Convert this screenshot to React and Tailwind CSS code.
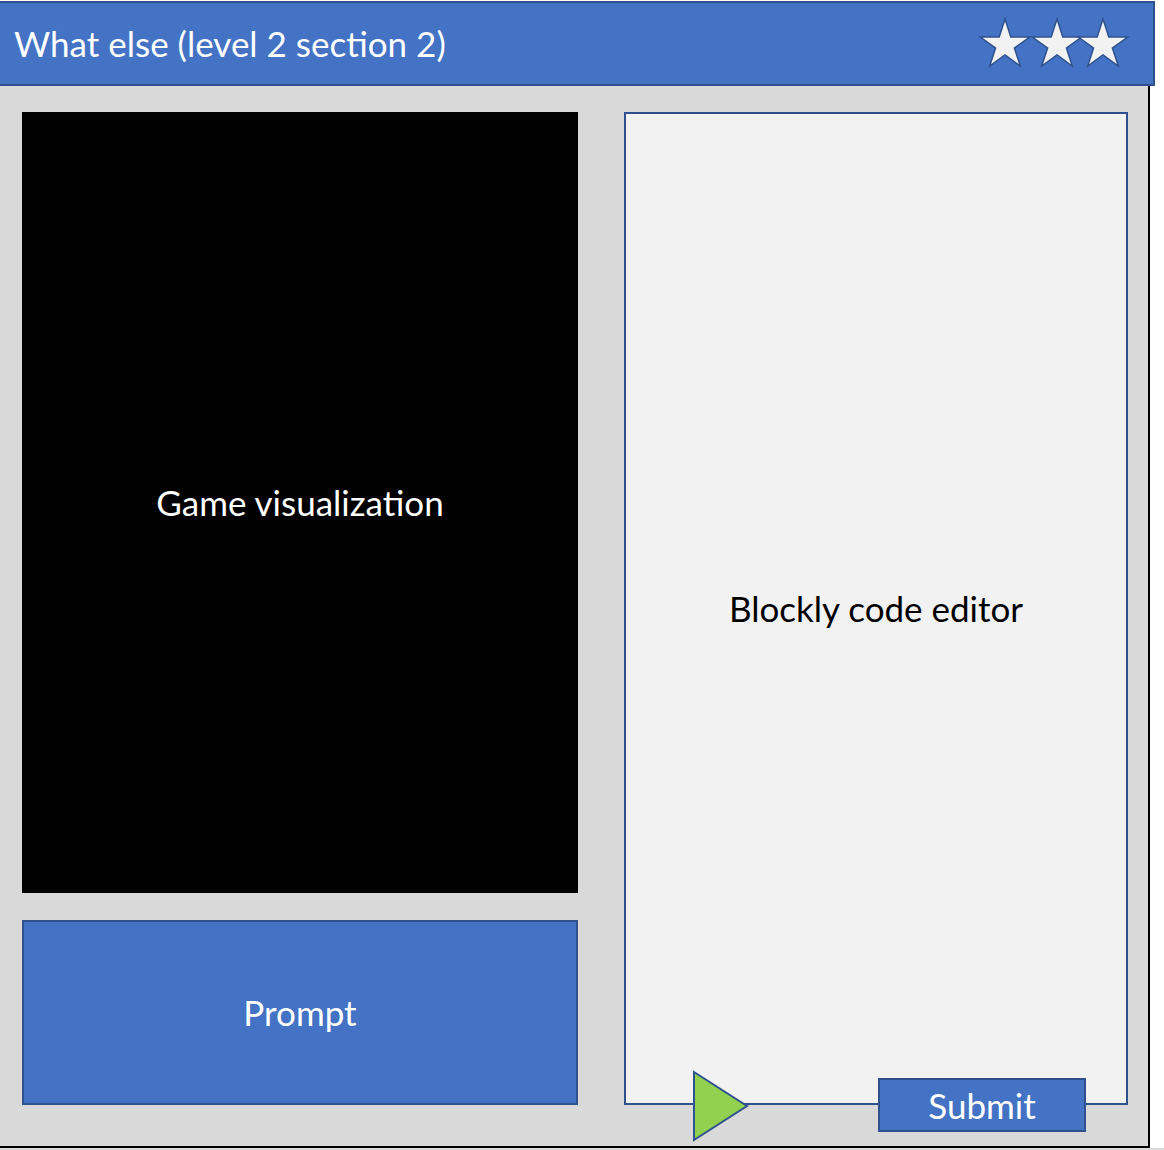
const starPoints = (cx, cy, R) => {
  const r = R * 0.382
  const pts = []
  for (let i = 0; i < 10; i++) {
    const rad = i % 2 === 0 ? R : r
    const a = (Math.PI / 5) * i - Math.PI / 2
    pts.push(`${(cx + rad * Math.cos(a)).toFixed(1)},${(cy + rad * Math.sin(a)).toFixed(1)}`)
  }
  return pts.join(' ')
}

const Stars = () => (
  <svg width="156" height="60" viewBox="0 0 156 60">
    {[28, 80, 126].map((cx) => (
      <polygon
        key={cx}
        points={starPoints(cx, 31, 26)}
        fill="#f2f2f2"
        stroke="#2f528f"
        strokeWidth="1.5"
      />
    ))}
  </svg>
)

export default function App() {
  return (
    <div className="w-[1164px] h-[1150px] bg-white relative" style={{ fontFamily: 'Lato, "Open Sans", sans-serif' }}>
      <div className="w-[1155px] h-[85px] mt-[1px] bg-[#4472c4] border-y-2 border-r-2 border-[#2f528f] flex items-center justify-between pl-[14px] pr-[20px]">
        <h1 className="text-white text-[35px] leading-none">What else (level 2 section 2)</h1>
        <Stars />
      </div>
      <div className="w-[1150px] h-[1062px] bg-[#d9d9d9] border-r-2 border-b-2 border-black flex pt-[26px] pl-[22px] gap-[46px]">
        <div className="flex flex-col w-[556px] gap-[27px]">
          <div className="h-[781px] bg-black flex items-center justify-center">
            <span className="text-white text-[35px]">Game visualization</span>
          </div>
          <div className="h-[185px] bg-[#4472c4] border-2 border-[#2f528f] flex items-center justify-center">
            <span className="text-white text-[35px]">Prompt</span>
          </div>
        </div>
        <div className="relative w-[504px] h-[993px] bg-[#f2f2f2] border-2 border-[#2f528f] flex items-center justify-center">
          <span className="text-black text-[35px]">Blockly code editor</span>
          <svg className="absolute left-[66px] top-[956px]" width="58" height="72" viewBox="0 0 58 72">
            <polygon points="2,2 55,36 2,70" fill="#92d050" stroke="#2f528f" strokeWidth="2" />
          </svg>
          <button className="absolute left-[252px] top-[964px] w-[208px] h-[54px] bg-[#4472c4] border-2 border-[#2f528f] text-white text-[35px] leading-none flex items-center justify-center">
            Submit
          </button>
        </div>
      </div>
      <div className="h-[3px] w-full bg-[#d9d9d9]" />
    </div>
  )
}
